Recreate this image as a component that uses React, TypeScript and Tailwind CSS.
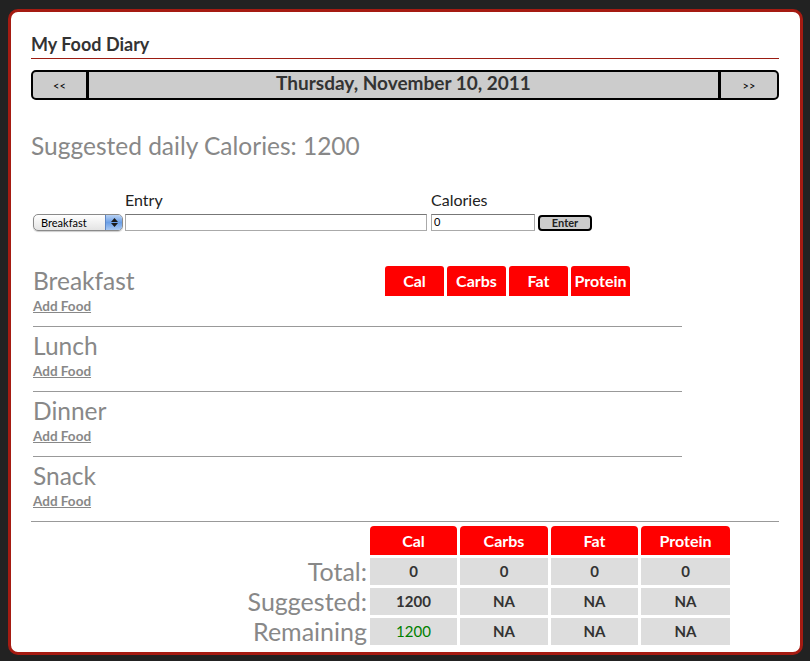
import React from "react";

const font = { fontFamily: "Lato, 'Open Sans', sans-serif" };

const meals = ["Breakfast", "Lunch", "Dinner", "Snack"];
const heads = ["Cal", "Carbs", "Fat", "Protein"];

function SelectBox() {
  return (
    <div className="ml-[2px] flex h-[17px] w-[90px] items-stretch overflow-hidden rounded-[5px] border border-[#8a8a8a] bg-gradient-to-b from-white to-[#e4e4e4] shadow-[0_1px_1px_rgba(0,0,0,0.2)]">
      <span className="flex-1 pl-[7px] text-[11px] leading-[15px] text-black">Breakfast</span>
      <span className="flex w-[17px] flex-col items-center justify-center gap-[1px] border-l border-[#5e86c4] bg-gradient-to-b from-[#b9d2f3] via-[#6a9ee6] to-[#a8c8f2]">
        <svg width="7" height="4" viewBox="0 0 7 4">
          <path d="M3.5 0 L7 4 L0 4 Z" fill="#1a1a1a" />
        </svg>
        <svg width="7" height="4" viewBox="0 0 7 4">
          <path d="M0 0 L7 0 L3.5 4 Z" fill="#1a1a1a" />
        </svg>
      </span>
    </div>
  );
}

export default function App() {
  return (
    <div className="min-h-screen bg-[#222] pl-[8px] pt-[9px]" style={font}>
      <div className="h-[646px] w-[795px] overflow-hidden rounded-[10px] border-[3px] border-[#a51b12] bg-white pl-[20px] pr-[21px]">
        {/* Title */}
        <div className="border-b border-[#9b1c12] pb-[4px] pt-[22px] text-[18px] font-bold leading-[20px] text-[#333]">
          My Food Diary
        </div>

        {/* Date navigation */}
        <div className="mt-[11px] flex h-[30px] overflow-hidden rounded-[5px] border-2 border-black bg-[#cccccc]">
          <button className="w-[56px] border-r-[3px] border-black text-[11px] leading-none text-black">
            &lt;&lt;
          </button>
          <div className="flex flex-1 items-center justify-center pb-[3px] text-[19px] font-bold text-[#333]">
            Thursday, November 10, 2011
          </div>
          <button className="w-[59px] border-l-[3px] border-black text-[11px] leading-none text-black">
            &gt;&gt;
          </button>
        </div>

        <div className="mt-[31px] text-[24.5px] leading-[30px] text-[#888]">
          Suggested daily Calories: 1200
        </div>

        {/* Entry form */}
        <div className="mt-[29px] flex text-[16px] leading-[20px] text-[#222]">
          <span className="ml-[94px] w-[306px]">Entry</span>
          <span>Calories</span>
        </div>
        <div className="mt-[4px] flex items-center">
          <SelectBox />
          <div className="ml-[2px] h-[17px] w-[302px] border border-[#aaa] border-t-[#777] bg-white" />
          <div className="ml-[4px] h-[17px] w-[104px] border border-[#aaa] border-t-[#777] bg-white pl-[2px] text-[11px] leading-[14px] text-black">
            0
          </div>
          <button className="ml-[3px] h-[16px] w-[54px] rounded-[4px] border-2 border-black bg-[#cccccc] text-[11px] font-bold leading-[12px] text-[#222]">
            Enter
          </button>
        </div>

        {/* Meals */}
        <div className="mt-[31px]">
          {meals.map((m, i) => (
            <div
              key={m}
              className={
                i < 3
                  ? "ml-[2px] w-[649px] border-b border-[#999] pb-[12px] pt-[4px]"
                  : "ml-[2px] pb-[12px] pt-[4px]"
              }
            >
              <div className="flex h-[30px] items-start">
                <span className="w-[352px] text-[24.5px] leading-[30px] text-[#888]">{m}</span>
                {i === 0 && (
                  <div className="flex gap-[3px]">
                    {heads.map((h) => (
                      <div
                        key={h}
                        className="flex h-[30px] w-[59px] items-center justify-center rounded-t-[3px] bg-[#ff0000] text-[16px] font-bold text-white"
                      >
                        {h}
                      </div>
                    ))}
                  </div>
                )}
              </div>
              <a className="mt-[2px] block w-fit text-[13.5px] font-bold leading-[16px] text-[#888] underline" href="#">
                Add Food
              </a>
            </div>
          ))}
        </div>

        {/* Totals */}
        <div className="border-t border-[#999] pt-[4px]">
          <div className="grid grid-cols-[336px_87px_88px_87px_89px] gap-[3px]">
            <div />
            {heads.map((h) => (
              <div
                key={h}
                className="flex h-[29px] items-center justify-center rounded-t-[4px] bg-[#ff0000] text-[16px] font-bold text-white"
              >
                {h}
              </div>
            ))}
            {[
              ["Total:", "0", "0", "0", "0"],
              ["Suggested:", "1200", "NA", "NA", "NA"],
              ["Remaining", "1200", "NA", "NA", "NA"],
            ].map((row, r) => (
              <React.Fragment key={row[0]}>
                <div className="flex h-[27px] items-center justify-end text-[25px] leading-[27px] text-[#888]">
                  {row[0]}
                </div>
                {row.slice(1).map((v, c) => (
                  <div
                    key={c}
                    className={
                      r === 2 && c === 0
                        ? "flex h-[27px] items-center justify-center bg-[#dddddd] text-[15px] text-[#008000]"
                        : "flex h-[27px] items-center justify-center bg-[#dddddd] text-[15px] font-bold text-[#333]"
                    }
                  >
                    {v}
                  </div>
                ))}
              </React.Fragment>
            ))}
          </div>
        </div>
      </div>
    </div>
  );
}
